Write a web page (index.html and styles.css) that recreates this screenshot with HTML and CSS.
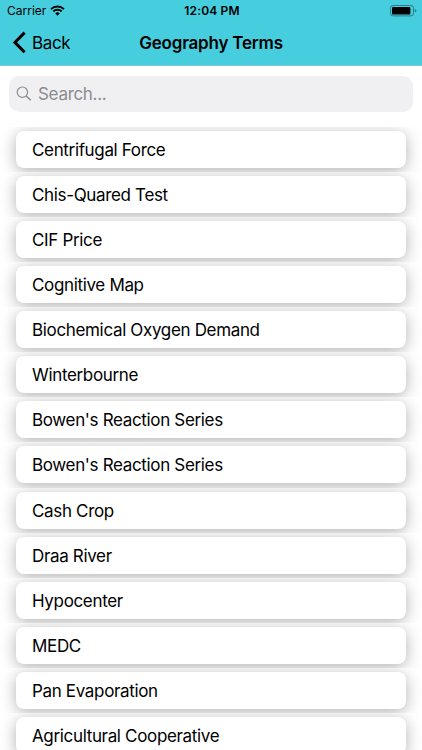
FILE: index.html
```html
<!DOCTYPE html>
<html lang="en">

<head>
    <meta charset="UTF-8">
    <meta name="viewport" content="width=device-width, initial-scale=1.0">
    <title>Geography Terms</title>
    <link rel="stylesheet" href="styles.css">
</head>

<body>
    <div class="header">
        <!-- status bar -->
        <div class="status">
            <div class="carrier">
                <span>Carrier</span>
                <svg class="wifi" width="15" height="11" viewBox="0 0 15 11">
                    <path d="M1 4.1a9.4 9.4 0 0 1 13 0M3.3 6.4a6.1 6.1 0 0 1 8.4 0" fill="none" stroke="#000" stroke-width="1.9" />
                    <path d="M5.2 8.3a3.4 3.4 0 0 1 4.6 0L7.5 10.7z" />
                </svg>
            </div>
            <div class="time">12:04 PM</div>
            <div class="power">
                <svg width="27" height="12" viewBox="0 0 27 12">
                    <rect x=".5" y=".5" width="23" height="10.4" rx="2.6" fill="none" stroke="#257e88" />
                    <rect x="2" y="2" width="18.4" height="7.4" rx="1" />
                    <path d="M24.8 3.9q1.7.6 1.7 1.8t-1.7 1.8z" fill="#257e88" />
                </svg>
            </div>
        </div>
        <!-- nav bar -->
        <div class="nav">
            <a class="back" href="#">
                <svg width="14" height="23" viewBox="0 0 14 23">
                    <path d="M12.6 1.6L2.9 11.4l9.7 9.8" fill="none" stroke="#000" stroke-width="3" />
                </svg>
                <span>Back</span>
            </a>
            <h1>Geography Terms</h1>
        </div>
    </div>
    <div class="search">
        <svg width="16" height="16" viewBox="0 0 16 16">
            <g fill="none" stroke="#8b8b90" stroke-width="1.2">
                <circle cx="6.4" cy="6.2" r="5.2" />
                <path d="M10.2 10l4.6 4.3" stroke-width="1.5" />
            </g>
        </svg>
        <span>Search...</span>
    </div>
    <ul class="list">
        <li><a href="#">Centrifugal Force</a></li>
        <li><a href="#">Chis-Quared Test</a></li>
        <li><a href="#">CIF Price</a></li>
        <li><a href="#">Cognitive Map</a></li>
        <li><a href="#">Biochemical Oxygen Demand</a></li>
        <li><a href="#">Winterbourne</a></li>
        <li><a href="#">Bowen's Reaction Series</a></li>
        <li><a href="#">Bowen's Reaction Series</a></li>
        <li><a href="#">Cash Crop</a></li>
        <li><a href="#">Draa River</a></li>
        <li><a href="#">Hypocenter</a></li>
        <li><a href="#">MEDC</a></li>
        <li><a href="#">Pan Evaporation</a></li>
        <li><a href="#">Agricultural Cooperative</a></li>
    </ul>
</body>

</html>
```

FILE: styles.css
```css
* {
    margin: 0;
    padding: 0;
    box-sizing: border-box;
}

body {
    height: 750px;
    overflow: hidden;
    background-color: #fff;
    color: #000;
    font-family: Inter, "Liberation Sans", sans-serif;
}

ul {
    list-style: none;
}

a {
    color: #000;
    text-decoration: none;
}

svg {
    display: block;
}

.header {
    height: 66px;
    background-color: #46cdde;
    border-bottom: 1px solid #7fccd8;
}

.status {
    display: grid;
    grid-template-columns: 1fr auto 1fr;
    align-items: center;
    height: 21px;
    padding: 0 5px 0 7px;
    font-size: 12px;
}

.carrier {
    display: flex;
    align-items: center;
    gap: 4px;
    letter-spacing: 0;
}

.time {
    font-weight: 600;
    letter-spacing: 0.15px;
}

.power {
    justify-self: end;
}

.nav {
    display: grid;
    grid-template-columns: 1fr auto 1fr;
    align-items: center;
    height: 43px;
    padding: 0 12px;
}

.back {
    display: flex;
    align-items: center;
    gap: 6px;
    font-size: 17px;
    letter-spacing: -0.35px;
}

.nav h1 {
    font-size: 17px;
    font-weight: 600;
    letter-spacing: -0.2px;
}

.search {
    display: flex;
    align-items: center;
    gap: 6px;
    height: 36px;
    margin: 10px 9px 14.5px;
    padding-left: 7px;
    border-radius: 10px;
    background-color: #f0f0f3;
    color: #8b8b90;
    font-size: 17px;
    letter-spacing: -0.3px;
}

/* every row clips the shadow of its card */
.list li {
    height: 45.13px;
    padding: 4px 16.4px;
    overflow: hidden;
}

.list a {
    display: block;
    height: 37px;
    padding-left: 15.6px;
    border-radius: 8px;
    background-color: #fff;
    box-shadow: 0 3px 16px rgba(0, 0, 0, 0.31);
    font-size: 17px;
    line-height: 39px;
    letter-spacing: -0.34px;
}
```
